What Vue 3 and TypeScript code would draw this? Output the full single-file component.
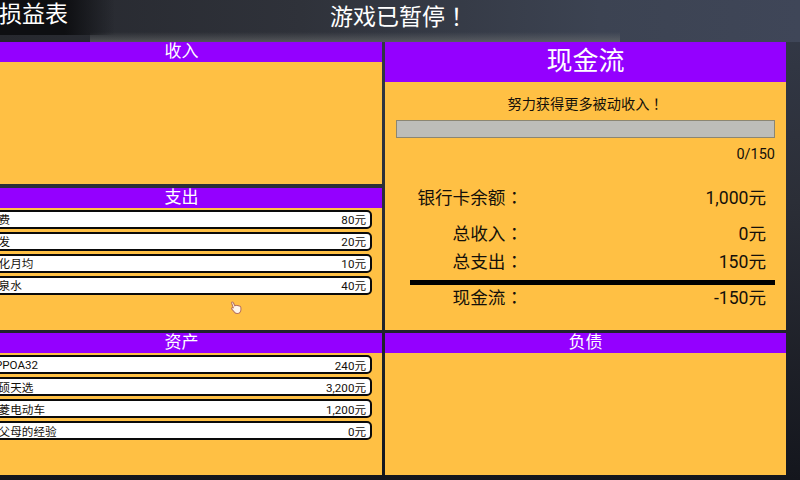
<script setup lang="ts">
interface Item {
  name: string
  value: string
}

const expenses: Item[] = [
  { name: '话费', value: '80元' },
  { name: '理发', value: '20元' },
  { name: '美化月均', value: '10元' },
  { name: '矿泉水', value: '40元' },
]

const assets: Item[] = [
  { name: 'OPPOA32', value: '240元' },
  { name: '华硕天选', value: '3,200元' },
  { name: '三菱电动车', value: '1,200元' },
  { name: '听父母的经验', value: '0元' },
]

const summary: Item[] = [
  { name: '总收入', value: '0元' },
  { name: '总支出', value: '150元' },
]
</script>

<template>
  <div class="screen">
    <header class="top">
      <span class="sheet-title">损益表</span>
      <span class="paused">游戏已暂停<span class="mark">！</span></span>
    </header>

    <main class="board">
      <section class="panel">
        <h2 class="head">收入</h2>
      </section>

      <section class="panel cash">
        <h2 class="head head-big">现金流</h2>
        <p class="hint">努力获得更多被动收入<span class="mark">！</span></p>
        <div class="bar"></div>
        <p class="progress">0/150</p>
        <div class="line balance">
          <span class="label">银行卡余额<span class="mark">：</span></span>
          <span>1,000元</span>
        </div>
        <div v-for="row in summary" :key="row.name" class="line">
          <span class="label">{{ row.name }}<span class="mark">：</span></span>
          <span>{{ row.value }}</span>
        </div>
        <div class="rule"></div>
        <div class="line net">
          <span class="label">现金流<span class="mark">：</span></span>
          <span>-150元</span>
        </div>
      </section>

      <section class="panel">
        <h2 class="head">支出</h2>
        <ul class="items">
          <li v-for="item in expenses" :key="item.name" class="item">
            <span>{{ item.name }}</span>
            <span>{{ item.value }}</span>
          </li>
        </ul>
        <svg class="cursor" viewBox="0 0 14 16" width="12" height="14" aria-hidden="true">
          <path
            d="M2.200 1.200c.8-.5 1.500.1 1.900.9l1.500 3.200c.9-.5 2-.5 2.800-.1.900-.3 1.800-.1 2.400.5.900 0 1.700.7 1.900 1.700.2 1.500.1 3.400-.5 4.800-.6 1.400-1.900 2.300-3.600 2.300-1.500 0-2.800-.7-3.600-1.900L2 9.200c-.4-.6-.1-1.300.6-1.400.5-.1 1 .1 1.400.5L2 2.600c-.2-.6-.2-1.100.2-1.400z"
            fill="#fff6ea"
            stroke="#b5705c"
            stroke-width="1.200"
          />
        </svg>
      </section>

      <section class="panel">
        <h2 class="head">资产</h2>
        <ul class="items">
          <li v-for="item in assets" :key="item.name" class="item">
            <span>{{ item.name }}</span>
            <span>{{ item.value }}</span>
          </li>
        </ul>
      </section>

      <section class="panel">
        <h2 class="head">负债</h2>
      </section>
    </main>
  </div>
</template>

<style scoped>
* {
  box-sizing: border-box;
}

.screen {
  position: relative;
  width: 800px;
  height: 480px;
  overflow: hidden;
  font-family: Roboto, "Noto Sans CJK SC", sans-serif;
  color: #14100a;
  background:
    linear-gradient(90deg, #0e0f12 0, #0e0f12 65px, rgba(14, 15, 18, 0) 115px) 0 0 / 100% 35px no-repeat,
    linear-gradient(180deg, rgba(120, 120, 120, 0), rgba(120, 122, 122, 0.5)) 90px 32px / 530px 10px no-repeat,
    linear-gradient(90deg, #26282e 0, #2f323a 300px, #3c4352 600px, #3f4658 100%) 0 0 / 100% 42px no-repeat,
    linear-gradient(180deg, #343a49 0, #2b2e37 42%, #14161d 100%);
}

.top {
  display: flex;
  height: 42px;
  color: #fff;
  font-size: 23px;
  line-height: 30px;
}

.sheet-title {
  margin-left: -1px;
}

.paused {
  margin-left: 262px;
  padding-top: 3px;
}

.mark {
  font-family: Roboto, "Noto Sans CJK TC", sans-serif;
}

.board {
  display: grid;
  grid-template-columns: 401px 401px;
  grid-template-rows: 142px 142px 142px;
  gap: 3.700px 3px;
  margin-left: -19px;
}

.panel {
  position: relative;
  background: #ffc044;
}

.cash {
  grid-row: span 2;
}

.head {
  height: 20px;
  margin: 0;
  background: #9400ff;
  color: #fff;
  font-size: 17px;
  font-weight: 400;
  line-height: 18px;
  text-align: center;
}

.head-big {
  height: 40px;
  font-size: 26px;
  line-height: 38px;
}

.items {
  display: flex;
  flex-direction: column;
  gap: 3px;
  margin: 2px 10px 0 0;
  padding: 0;
  list-style: none;
}

.item {
  display: flex;
  justify-content: space-between;
  align-items: center;
  height: 19px;
  padding: 0 4px;
  background: #fff;
  border: 2px solid #0a0a0a;
  border-radius: 5px;
  font-size: 11.600px;
}

.cursor {
  position: absolute;
  left: 249px;
  top: 113px;
}

.hint {
  margin: 13px 0 0;
  font-size: 14.200px;
  line-height: 18px;
  text-align: center;
}

.bar {
  height: 18px;
  margin: 7px 11px 0;
  background: #bdbdb9;
  border: 1px solid #8b8672;
}

.progress {
  margin: 9px 11px 0 0;
  font-size: 14.500px;
  line-height: 16px;
  text-align: right;
}

.line {
  display: flex;
  justify-content: space-between;
  height: 28px;
  padding: 0 20px 0 32px;
  font-size: 17.600px;
  line-height: 28px;
}

.balance {
  margin-top: 21px;
  margin-bottom: 8px;
}

.net {
  height: 26px;
  line-height: 26px;
}

.label {
  width: 106px;
  text-align: right;
  white-space: nowrap;
}

.rule {
  height: 5px;
  margin: 4px 11px 0 25px;
  background: #000;
}
</style>
